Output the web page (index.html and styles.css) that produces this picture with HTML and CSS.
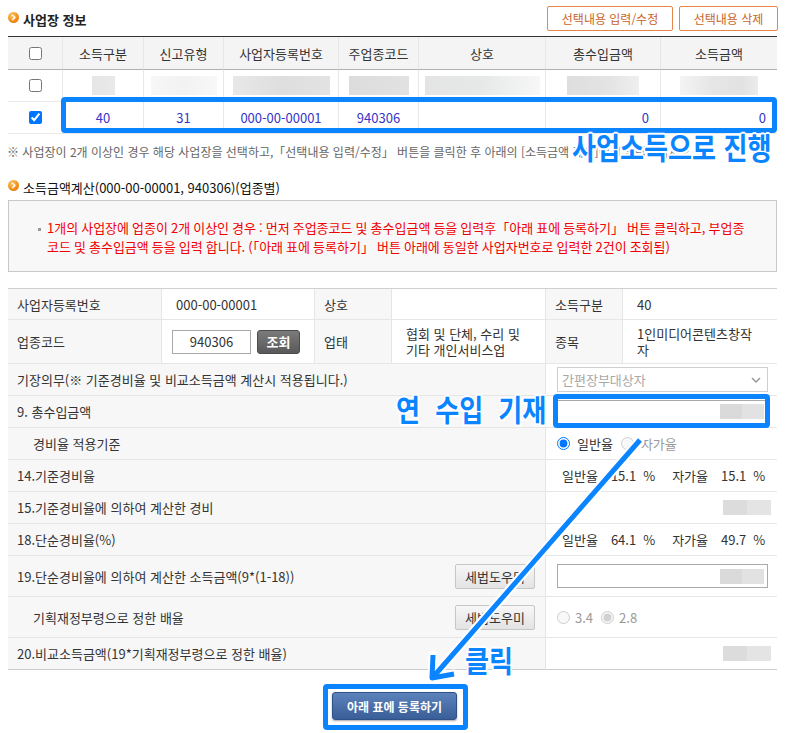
FILE: index.html
```html
<!DOCTYPE html>
<html lang="ko">
<head>
<meta charset="utf-8">
<title>사업장 정보</title>
<link rel="stylesheet" href="styles.css">
</head>
<body>
<div class="page">
  <div class="topbar">
    <h2 class="sec-title"><span class="ico"><svg width="7" height="7" viewBox="0 0 7 7"><polyline points="2.2,1 4.8,3.5 2.2,6" fill="none" stroke="#fff" stroke-width="1.6"/></svg></span>사업장 정보</h2>
    <div class="actions">
      <button class="btn-line w1">선택내용 입력/수정</button>
      <button class="btn-line w2">선택내용 삭제</button>
    </div>
  </div>

  <div class="biz">
    <div class="c h"><input type="checkbox" class="cb"></div>
    <div class="c h">소득구분</div>
    <div class="c h">신고유형</div>
    <div class="c h">사업자등록번호</div>
    <div class="c h">주업종코드</div>
    <div class="c h">상호</div>
    <div class="c h">총수입금액</div>
    <div class="c h end">소득금액</div>

    <div class="c"><input type="checkbox" class="cb"></div>
    <div class="c"><span class="blur b1"></span></div>
    <div class="c"><span class="blur b2"></span></div>
    <div class="c"><span class="blur b3"></span></div>
    <div class="c"><span class="blur b4"></span></div>
    <div class="c"><span class="blur b5"></span></div>
    <div class="c"><span class="blur b6"></span></div>
    <div class="c end"><span class="blur b7"></span></div>

    <div class="c"><input type="checkbox" class="cb" checked></div>
    <div class="c v">40</div>
    <div class="c v">31</div>
    <div class="c v">000-00-00001</div>
    <div class="c v">940306</div>
    <div class="c v"></div>
    <div class="c v num">0</div>
    <div class="c v num end">0</div>
  </div>

  <p class="note">※ 사업장이 2개 이상인 경우 해당 사업장을 선택하고,「선택내용 입력/수정」 버튼을 클릭한 후 아래의 [소득금액 계산]에서 입력하십시오.</p>

  <h3 class="sec-title sub"><span class="ico"><svg width="7" height="7" viewBox="0 0 7 7"><polyline points="2.2,1 4.8,3.5 2.2,6" fill="none" stroke="#fff" stroke-width="1.6"/></svg></span>소득금액계산(000-00-00001, 940306)(업종별)</h3>

  <div class="notice">
    <p>1개의 사업장에 업종이 2개 이상인 경우 : 먼저 주업종코드 및 총수입금액 등을 입력후「아래 표에 등록하기」 버튼 클릭하고, 부업종<br>코드 및 총수입금액 등을 입력 합니다. (「아래 표에 등록하기」 버튼 아래에 동일한 사업자번호로 입력한 2건이 조회됨)</p>
  </div>

  <div class="calc">
    <div class="l">사업자등록번호</div>
    <div class="d">000-00-00001</div>
    <div class="l">상호</div>
    <div class="d"></div>
    <div class="l">소득구분</div>
    <div class="d end">40</div>

    <div class="l">업종코드</div>
    <div class="d tight"><input class="code-input" type="text" value="940306"><button class="btn-dark">조회</button></div>
    <div class="l">업태</div>
    <div class="d multi">협회 및 단체, 수리 및<br>기타 개인서비스업</div>
    <div class="l">종목</div>
    <div class="d multi end">1인미디어콘텐츠창작<br>자</div>

    <div class="l span4">기장의무(※ 기준경비율 및 비교소득금액 계산시 적용됩니다.)</div>
    <div class="d r span2 end"><div class="sel"><span>간편장부대상자</span><svg width="10" height="6" viewBox="0 0 10 6"><polyline points="1,1 5,5 9,1" fill="none" stroke="#999" stroke-width="1.5"/></svg></div></div>

    <div class="l span4">9. 총수입금액</div>
    <div class="d r span2 end"><div class="ibox"><span class="blur b8"></span></div></div>

    <div class="l span4 indent">경비율 적용기준</div>
    <div class="d r span2 end"><div class="radios">
      <label class="radio"><input type="radio" name="base" checked>일반율</label>
      <label class="radio off"><input type="radio" name="base" disabled>자가율</label>
    </div></div>

    <div class="l span4">14.기준경비율</div>
    <div class="d rates span2 end"><span>일반율</span><span class="val">15.1</span><span>%</span><span class="gap">자가율</span><span class="val">15.1</span><span>%</span></div>

    <div class="l span4">15.기준경비율에 의하여 계산한 경비</div>
    <div class="d right span2 end"><span class="blur b9"></span></div>

    <div class="l span4">18.단순경비율(%)</div>
    <div class="d rates span2 end"><span>일반율</span><span class="val">64.1</span><span>%</span><span class="gap">자가율</span><span class="val">49.7</span><span>%</span></div>

    <div class="l span4 split">19.단순경비율에 의하여 계산한 소득금액(9*(1-18))<button class="btn-gray">세법도우미</button></div>
    <div class="d r span2 end"><div class="ibox"><span class="blur b8"></span></div></div>

    <div class="l span4 split indent">기획재정부령으로 정한 배율<button class="btn-gray">세법도우미</button></div>
    <div class="d r span2 end"><div class="radios small">
      <label class="radio off"><input type="radio" name="mul" disabled>3.4</label>
      <label class="radio off"><input type="radio" name="mul" checked disabled>2.8</label>
    </div></div>

    <div class="l span4 last">20.비교소득금액(19*기획재정부령으로 정한 배율)</div>
    <div class="d right span2 end last"><span class="blur b9"></span></div>
  </div>

  <div class="submit">
    <button class="btn-primary">아래 표에 등록하기</button>
  </div>
</div>

<div class="anno">
  <div class="hl hl-row"></div>
  <div class="hl hl-income"></div>
  <div class="hl hl-submit"></div>
  <svg class="arrow" width="789" height="733" viewBox="0 0 789 733">
    <g fill="none" stroke-linejoin="round">
      <path d="M640 440 L434 676 M433 655 L432 678 L454 674" stroke="#fff" stroke-width="9" stroke-linecap="round"/>
      <path d="M640 440 L434 676 M433 655 L432 678 L454 674" stroke="#0a84ff" stroke-width="5" stroke-linecap="butt"/>
    </g>
  </svg>
  <p class="callout c1">사업소득으로 진행</p>
  <p class="callout c2">연 수입 기재</p>
  <p class="callout c3">클릭</p>
</div>
</body>
</html>
```
FILE: styles.css
```css
* { box-sizing: border-box; }
html, body { margin: 0; padding: 0; }
body {
  width: 789px;
  height: 733px;
  overflow: hidden;
  position: relative;
  font-family: "Noto Sans CJK KR", "Noto Sans", sans-serif;
  font-size: 13px;
  color: #333;
  background: #fff;
}
.page { padding: 0 12px 0 8px; }

/* titles */
.topbar { display: flex; justify-content: space-between; height: 36px; }
.sec-title {
  margin: 0;
  display: flex;
  align-items: flex-start;
  gap: 4px;
  font-size: 13px;
  font-weight: 700;
  color: #222;
  line-height: 16px;
  padding-top: 12px;
}
.sec-title.sub { padding-top: 0; margin-top: 20px; font-weight: 400; color: #111; }
.ico {
  width: 11px; height: 11px; border-radius: 50%;
  background: radial-gradient(circle at 35% 30%, #ffc45c, #f28c16 60%, #e0700a);
  display: flex; align-items: center; justify-content: center; flex: none;
}
.ico svg { display: block; }
.actions { display: flex; gap: 6px; padding-top: 6px; margin-right: -1px; }
.btn-line {
  height: 25px; padding: 0;
  border: 1px solid #e5874a; border-radius: 2px;
  background: #fff; color: #c9642a;
  font-family: inherit; font-size: 12px; line-height: 23px;
}
.btn-line.w1 { width: 126px; }
.btn-line.w2 { width: 99px; }

/* business list */
.biz {
  display: grid;
  grid-template-columns: 55px 81px 80px 115px 80px 127px 115px 116px;
  grid-template-rows: 33px 32px 32px;
  border-top: 1px solid #333;
}
.biz .c {
  display: flex; align-items: center; justify-content: center;
  border-right: 1px solid #e8e8e8; border-bottom: 1px solid #e8e8e8;
}
.biz .end { border-right: 0; }
.biz .h { background: #f4f4f4; border-bottom-color: #b0b0b0; border-right-color: #e6e6e6; }
.biz .v { color: #3535c8; }
.biz .num { justify-content: flex-end; padding-right: 11px; }
.cb { margin: 0; width: 13px; height: 13px; }

.blur { display: inline-block; height: 19px; background: #e4e4e4; }
.b1 { width: 23px; background: linear-gradient(90deg, #e6e6e6, #e9e9e9); }
.b2 { width: 66px; background: linear-gradient(90deg, #f7f7f7, #f2f2f2 50%, #f8f8f8); }
.b3 { width: 97px; background: linear-gradient(90deg, #e8e8e8, #dedede 50%, #e3e3e3); }
.b4 { width: 60px; background: linear-gradient(90deg, #dcdcdc, #e2e2e2); }
.b5 { width: 115px; background: linear-gradient(90deg, #e4e4e4, #e7e9e9 50%, #f7f7f7); }
.b6 { width: 72px; background: linear-gradient(90deg, #dedede, #e4e4e4 60%, #efefef); }
.b7 { width: 78px; background: linear-gradient(90deg, #f4f4f6, #e6e6e6 40%, #e2e2e2 80%, #ececec); }
.b8 { width: 44px; height: 15px; background: linear-gradient(90deg, #dadada 50%, #e2e2e2 50%); }
.b9 { width: 48px; height: 15px; background: linear-gradient(90deg, #dcdcdc 50%, #e4e4e4 50%); }

.note {
  margin: 10px 0 0 -1px;
  font-size: 12px; line-height: 16px; color: #666;
  white-space: nowrap; overflow: hidden;
}

/* notice */
.notice {
  margin-top: 4px; height: 72px;
  border: 1px solid #c8c8c8; background: #f8f8f8;
  padding: 17px 10px 0 38px;
}
.notice p {
  margin: 0; color: #f20000; font-size: 13px; line-height: 19px;
  word-spacing: -0.6px; white-space: nowrap;
}
.notice p::before {
  content: ""; display: inline-block; width: 3px; height: 3px;
  background: #999; vertical-align: middle; margin: 0 6px 0 -9px;
}

/* calc form */
.calc {
  margin-top: 16px;
  display: grid;
  grid-template-columns: 154px 153px 77px 154px 77px 154px;
  grid-template-rows: 31px 44px 32px 32px 32px 32px 32px 32px 41px 41px 32px;
  border-top: 1px solid #d0d0d0;
}
.calc .l, .calc .d {
  display: flex; align-items: center;
  border-bottom: 1px solid #e6e6e6; border-right: 1px solid #e6e6e6;
}
.calc .l { background: #f7f7f7; padding: 0 10px 0 9px; }
.calc .d { background: #fff; padding: 0 10px 0 14px; }
.calc .end { border-right: 0; }
.calc .last { border-bottom-color: #cccccc; }
.calc .tight { padding-left: 10px; }
.calc .multi { line-height: 16px; }
.calc .r { padding: 0 9px 0 11px; }
.calc .right { justify-content: flex-end; padding-right: 6px; }
.span4 { grid-column: span 4; }
.span2 { grid-column: span 2; }
.calc .indent { padding-left: 25px; }
.calc .split { justify-content: space-between; }

.code-input {
  width: 79px; height: 24px; padding: 0;
  border: 1px solid #a9a9a9; text-align: center;
  font-family: inherit; font-size: 13px; color: #333;
}
.btn-dark {
  width: 43px; height: 24px; margin-left: 6px; padding: 0;
  border: 1px solid #4c4c4c; border-radius: 3px;
  background: linear-gradient(#7b7b7b, #595959);
  color: #fff; font-family: inherit; font-size: 13px; font-weight: 700;
}
.btn-gray {
  width: 80px; height: 25px; padding: 0; flex: none;
  border: 1px solid #c6c6c6; border-radius: 2px;
  background: linear-gradient(#f7f7f7, #e3e3e3);
  color: #333; font-family: inherit; font-size: 13px;
}
.sel {
  width: 211px; height: 25px;
  border: 1px solid #cfcfcf; background: #fff; color: #a8a8a8;
  display: flex; align-items: center; justify-content: space-between;
  padding: 0 6px 0 4px;
}
.ibox {
  width: 211px; height: 24px;
  border: 1px solid #aaa; background: #fff;
  display: flex; align-items: center; justify-content: flex-end;
  padding-right: 3px;
}
.radios { display: flex; align-items: center; }
.radio { display: flex; align-items: center; gap: 7px; margin-right: 8px; color: #333; white-space: nowrap; }
.radio input { margin: 0; width: 13px; height: 13px; }
.radio.off { color: #999; }
.radios.small .radio { gap: 5px; }
.calc .rates { padding: 0 0 0 16px; white-space: nowrap; }
.rates span { flex: none; }
.rates .val { margin-left: 13px; margin-right: 7px; }
.rates .gap { margin-left: 17px; }

/* submit */
.submit { display: flex; justify-content: center; padding: 22px 0 0 4px; }
.btn-primary {
  width: 125px; height: 28px; padding: 0;
  border: 1px solid #2e5187; border-radius: 3px;
  background: linear-gradient(#5c82bc, #3a5e97);
  color: #fff; font-family: inherit; font-size: 12px; font-weight: 700;
  box-shadow: 0 1px 2px rgba(0,0,0,.35);
}

/* annotations */
.anno { position: absolute; left: 0; top: 0; width: 789px; height: 733px; pointer-events: none; }
.hl { position: absolute; border: 5px solid #0a84ff; border-radius: 4px; }
.hl-row { left: 61px; top: 97px; width: 716px; height: 36px; }
.hl-income { left: 553px; top: 394px; width: 217px; height: 34px; }
.hl-submit { left: 323px; top: 684px; width: 145px; height: 46px; }
.arrow { position: absolute; left: 0; top: 0; }
.callout {
  position: absolute; margin: 0;
  font-size: 30px; font-weight: 700; line-height: 26px;
  color: #0a84ff; white-space: nowrap;
  transform: scaleX(.87); transform-origin: 0 0;
  text-shadow: 2px 0 #fff, -2px 0 #fff, 0 2px #fff, 0 -2px #fff,
    1.5px 1.5px #fff, -1.5px 1.5px #fff, 1.5px -1.5px #fff, -1.5px -1.5px #fff;
}
.c1 { left: 572px; top: 133px; }
.c2 { left: 396px; top: 395px; word-spacing: 9px; }
.c3 { left: 465px; top: 646px; }
```
